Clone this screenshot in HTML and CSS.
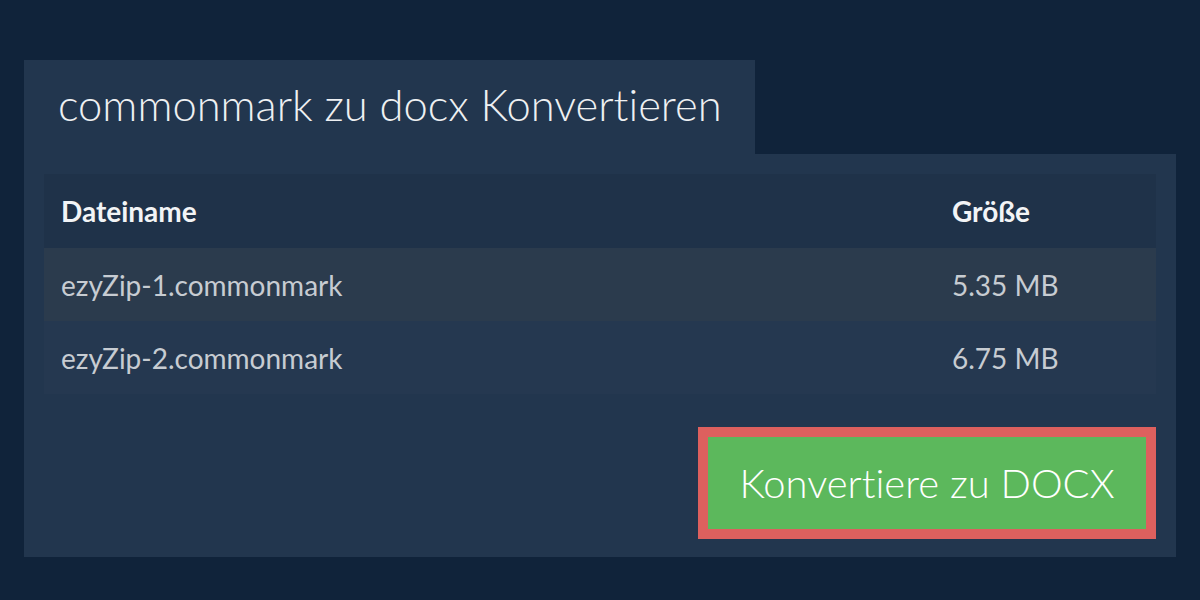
FILE: index.html
```html
<!DOCTYPE html>
<html lang="de">
<head>
<meta charset="utf-8">
<title>commonmark zu docx Konvertieren</title>
<link rel="stylesheet" href="styles.css">
</head>
<body>
<main class="wrap">
  <div class="tab">
    <h1 class="title">commonmark zu docx Konvertieren</h1>
  </div>
  <section class="panel">
    <table class="files">
      <thead>
        <tr><th class="c-name">Dateiname</th><th class="c-size">Größe</th></tr>
      </thead>
      <tbody>
        <tr class="odd"><td>ezyZip-1.commonmark</td><td>5.35 MB</td></tr>
        <tr class="even"><td>ezyZip-2.commonmark</td><td>6.75 MB</td></tr>
      </tbody>
    </table>
    <div class="actions">
      <button class="convert">Konvertiere zu DOCX</button>
    </div>
  </section>
</main>
</body>
</html>
```
FILE: styles.css
```css
html, body {
  margin: 0;
  padding: 0;
  background: #10233a;
  font-family: Lato, "Noto Sans", sans-serif;
  font-variant-ligatures: none;
}
.wrap {
  padding: 60px 24px 0 24px;
}
.tab {
  width: 731px;
  height: 94px;
  background: #22364e;
  display: flex;
  align-items: center;
  box-sizing: border-box;
  padding-left: 34px;
  padding-bottom: 4px;
}
.title {
  margin: 0;
  font-weight: 300;
  font-size: 43.5px;
  color: #eef0f2;
  line-height: 1;
  font-variant-ligatures: none;
}
.panel {
  background: #22364e;
  padding: 20px 20px 20px 20px;
  height: 403px;
  box-sizing: border-box;
}
.files {
  width: 100%;
  border-collapse: collapse;
  font-size: 28px;
}
.files th, .files td {
  text-align: left;
  padding: 0 0 0 17px;
  height: 73px;
  font-variant-ligatures: none;
}
.files th {
  color: #f2f4f6;
  font-weight: 700;
  height: 74px;
  background: #1f3249;
}
.files td {
  color: #c7ccd2;
}
.c-size {
  width: 204px;
}
.odd td { background: #2b3b4d; }
.even td { background: #253850; }
.actions {
  display: flex;
  justify-content: flex-end;
  margin-top: 33px;
}
.convert {
  background: #5cb85c;
  border: 10px solid #dd605e;
  color: #ffffff;
  font-family: Lato, "Noto Sans", sans-serif;
  font-weight: 300;
  font-size: 40px;
  font-variant-ligatures: none;
  width: 458px;
  height: 112px;
  padding: 0;
}
```
